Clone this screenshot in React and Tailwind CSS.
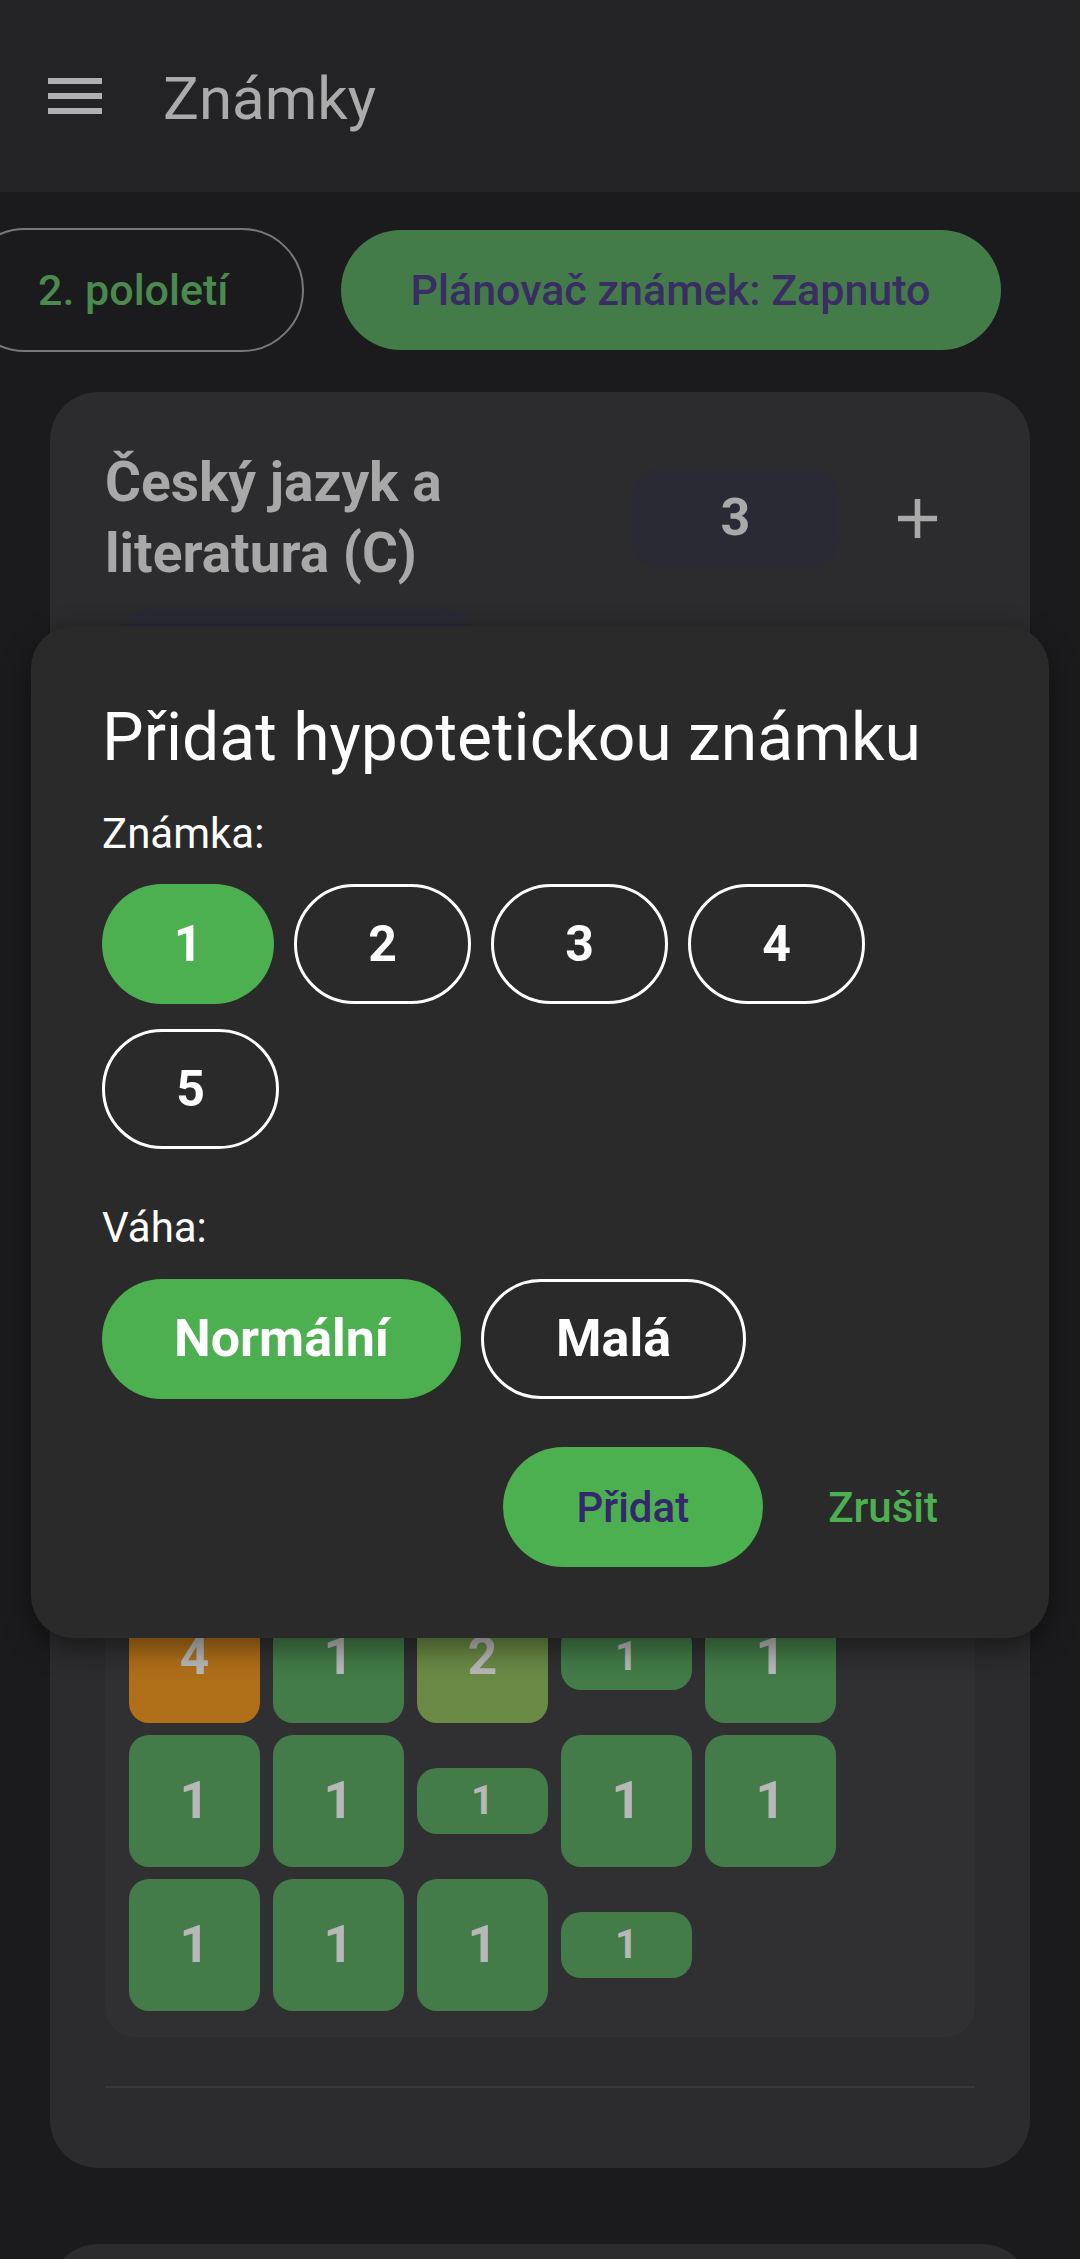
import React, { useState } from 'react'

// barvy podle ztmaveného pozadí (scrim pod dialogem)
const tileColors = {
  green: 'bg-[#437c48]',
  orange: 'bg-[#b06f19]',
  olive: 'bg-[#6a8a45]',
}

const gradeRows = [
  [{ v: 4, c: 'orange' }, { v: 1, c: 'green' }, { v: 2, c: 'olive' }, { v: 1, c: 'green', small: true }, { v: 1, c: 'green' }],
  [{ v: 1, c: 'green' }, { v: 1, c: 'green' }, { v: 1, c: 'green', small: true }, { v: 1, c: 'green' }, { v: 1, c: 'green' }],
  [{ v: 1, c: 'green' }, { v: 1, c: 'green' }, { v: 1, c: 'green' }, { v: 1, c: 'green', small: true }],
]

const MenuIcon = () => (
  <svg width="54" height="36" viewBox="0 0 54 36" className="shrink-0">
    <rect x="0" y="0" width="54" height="6" fill="#b0b0b0" />
    <rect x="0" y="15" width="54" height="6" fill="#b0b0b0" />
    <rect x="0" y="30" width="54" height="6" fill="#b0b0b0" />
  </svg>
)

const PlusIcon = () => (
  <svg width="67" height="67" viewBox="0 0 24 24" className="shrink-0">
    <path d="M19 13h-6v6h-2v-6H5v-2h6V5h2v6h6v2z" fill="#a9a9a9" />
  </svg>
)

const GradeTile = ({ v, c, small }) => (
  <div
    className={`flex w-[131px] items-center justify-center rounded-[20px] font-bold text-[#b8b8b8] ${tileColors[c]} ${
      small ? 'h-[66px] text-[40px]' : 'h-[132px] text-[52px]'
    }`}
  >
    {v}
  </div>
)

const HypoDialog = () => {
  const [grade, setGrade] = useState(1)
  const [weight, setWeight] = useState('normal')

  return (
    <div className="absolute left-[31px] top-[626px] w-[1018px] rounded-[42px] bg-[#2a2a2a] px-[71px] pb-[71px] pt-[72px] shadow-[0_10px_30px_rgba(0,0,0,0.45)]">
      <h2 className="text-[66px] font-normal leading-[80px] text-white">Přidat hypotetickou známku</h2>

      <p className="mt-[32px] text-[42px] leading-[48px] text-white">Známka:</p>
      <div className="mt-[26px] flex flex-wrap gap-x-[20px] gap-y-[25px]">
        {[1, 2, 3, 4, 5].map((g) => (
          <button
            key={g}
            onClick={() => setGrade(g)}
            className={`flex h-[120px] items-center justify-center rounded-full text-[50px] font-bold text-white ${
              grade === g ? 'w-[172px] bg-[#4caf50]' : 'w-[177px] border-[3px] border-white'
            }`}
          >
            {g}
          </button>
        ))}
      </div>

      <p className="mt-[55px] text-[42px] leading-[48px] text-white">Váha:</p>
      <div className="mt-[27px] flex gap-[20px]">
        <button
          onClick={() => setWeight('normal')}
          className={`flex h-[120px] items-center rounded-full px-[72px] text-[52px] font-bold text-white ${
            weight === 'normal' ? 'bg-[#4caf50]' : 'border-[3px] border-white'
          }`}
        >
          Normální
        </button>
        <button
          onClick={() => setWeight('small')}
          className={`flex h-[120px] items-center rounded-full px-[72px] text-[52px] font-bold text-white ${
            weight === 'small' ? 'bg-[#4caf50]' : 'border-[3px] border-white'
          }`}
        >
          Malá
        </button>
      </div>

      <div className="mt-[48px] flex items-center justify-end gap-[25px]">
        <button className="flex h-[120px] items-center rounded-full bg-[#4caf50] px-[74px] text-[42px] font-medium text-[#35276b]">
          Přidat
        </button>
        <button className="flex h-[120px] items-center px-[40px] text-[42px] font-medium text-[#4caf50]">
          Zrušit
        </button>
      </div>
    </div>
  )
}

export default function App() {
  return (
    <div className="relative h-[2259px] overflow-hidden bg-[#1b1b1d] font-['Roboto',sans-serif]">
      {/* horní lišta */}
      <header className="flex h-[192px] items-center bg-[#232325] pl-[48px]">
        <MenuIcon />
        <h1 className="ml-[61px] mt-[5px] text-[60px] font-normal leading-[72px] text-[#ababab]">Známky</h1>
      </header>

      {/* čipy */}
      <div className="flex items-center gap-[37px] overflow-hidden pt-[36px]">
        <button className="-ml-[37px] flex h-[124px] shrink-0 items-center rounded-full border-2 border-[#78777c] px-[73px] text-[43px] font-medium text-[#4a8a4f]">
          2. pololetí
        </button>
        <button className="flex h-[120px] shrink-0 items-center rounded-full bg-[#437c48] px-[70px] text-[43px] font-medium text-[#3a2d63]">
          Plánovač známek: Zapnuto
        </button>
      </div>

      <main className="px-[50px] pt-[40px]">
        <section className="rounded-[48px] bg-[#2c2c2e] p-[55px]">
          <div className="flex items-center">
            <h3 className="min-w-0 flex-1 text-[55px] font-bold leading-[71px] text-[#a8a8a8]">
              Český jazyk a literatura (C)
            </h3>
            <div className="flex h-[97px] w-[205px] items-center justify-center rounded-[24px] bg-[#292a33] text-[52px] font-bold text-[#a9a9a9]">
              3
            </div>
            <div className="ml-[46px] mr-[24px]">
              <PlusIcon />
            </div>
          </div>

          <div className="ml-[13px] mt-[19px] flex h-[96px] w-[357px] items-center rounded-[30px] bg-[#292a33] px-[33px] text-[44px] text-[#8a8a8a]">
            Průměr: 3.18
          </div>

          <div className="mt-[861px] rounded-[30px] bg-[#303032] px-[24px] py-[26px]">
            <div className="flex flex-col gap-[12px]">
              {gradeRows.map((row, i) => (
                <div key={i} className="flex items-center gap-[13px]">
                  {row.map((t, j) => (
                    <GradeTile key={j} {...t} />
                  ))}
                </div>
              ))}
            </div>
          </div>

          <div className="mt-[49px] h-[2px] bg-[#38383a]" />
          <div className="h-[25px]" />
        </section>

        <section className="mt-[76px] h-[200px] rounded-[48px] bg-[#2c2c2e]" />
      </main>

      <HypoDialog />
    </div>
  )
}
